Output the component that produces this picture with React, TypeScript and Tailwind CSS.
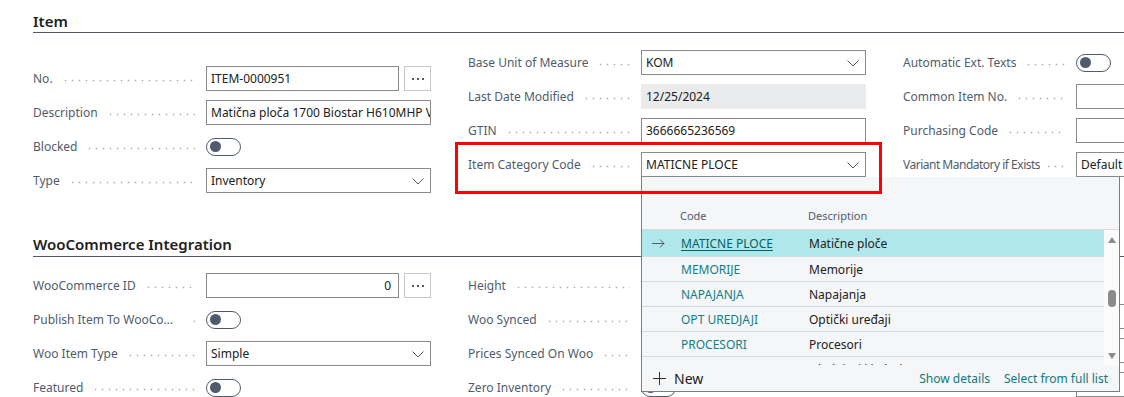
import React from 'react';

const Dots = ({ tight = false }: { tight?: boolean }) => (
  <span
    className={
      tight
        ? 'ml-[5px] mr-[8px] mt-[4px] h-[3px] min-w-[4px] flex-1 bg-[radial-gradient(circle,#a9afb8_0.75px,transparent_1.1px)] bg-[length:7px_3px] bg-repeat-x'
        : 'ml-[9px] mr-[11px] mt-[4px] h-[3px] min-w-[4px] flex-1 bg-[radial-gradient(circle,#a9afb8_0.75px,transparent_1.1px)] bg-[length:7px_3px] bg-repeat-x'
    }
  />
);

const Chevron = () => (
  <svg width="12" height="7" viewBox="0 0 12 7" fill="none" className="mt-px shrink-0">
    <path d="M0.5 0.5L6 6L11.5 0.5" stroke="#505c6d" strokeWidth="1" />
  </svg>
);

type RowProps = {
  label: string;
  long?: boolean;
  children?: React.ReactNode;
  overlay?: React.ReactNode;
  fieldOverlay?: React.ReactNode;
};

const Row = ({ label, long = false, children, overlay, fieldOverlay }: RowProps) => (
  <div className="relative flex h-[25px] items-center">
    <div className="flex w-[173px] items-center">
      <span
        className={
          long
            ? 'max-w-[162px] truncate pt-px tracking-[-0.5px] text-[#505c6d]'
            : 'max-w-[156px] truncate pt-px text-[#505c6d]'
        }
      >
        {label}
      </span>
      <Dots tight={long} />
    </div>
    <div className="relative flex h-full w-[225px] items-center">
      {children}
      {fieldOverlay}
    </div>
    {overlay}
  </div>
);

const TextBox = ({ value = '', right = false }: { value?: string; right?: boolean }) => (
  <div
    className={
      right
        ? 'flex h-full w-full items-center justify-end border border-[#8a8a8a] pr-[7px] pt-px'
        : 'flex h-full w-full items-center overflow-hidden whitespace-nowrap border border-[#8a8a8a] pl-[4px] pt-px'
    }
  >
    {value}
  </div>
);

const ReadOnly = ({ value }: { value: string }) => (
  <div className="flex h-full w-full items-center bg-[#eaebec] pl-[5px] pt-px">{value}</div>
);

const Select = ({ value }: { value: string }) => (
  <div className="flex h-full w-full items-center justify-between overflow-hidden whitespace-nowrap border border-[#8a8a8a] pl-[4px] pr-[6px]">
    <span className="pt-px">{value}</span>
    <Chevron />
  </div>
);

const Toggle = () => (
  <div className="flex h-[18px] w-[35px] items-center rounded-full border border-[#505c6d] px-[3px]">
    <div className="size-[11px] rounded-full bg-[#505c6d]" />
  </div>
);

const Lookup = ({ value, right = false }: { value: string; right?: boolean }) => (
  <>
    <div className="h-full w-[193px] shrink-0">
      <TextBox value={value} right={right} />
    </div>
    <div className="ml-[5px] flex h-full w-[27px] items-center justify-center gap-[3px] border border-[#c8c8c8]">
      <span className="size-[2px] rounded-full bg-[#212121]" />
      <span className="size-[2px] rounded-full bg-[#212121]" />
      <span className="size-[2px] rounded-full bg-[#212121]" />
    </div>
  </>
);

const categories = [
  { code: 'MATICNE PLOCE', desc: 'Matične ploče', selected: true },
  { code: 'MEMORIJE', desc: 'Memorije' },
  { code: 'NAPAJANJA', desc: 'Napajanja' },
  { code: 'OPT UREDJAJI', desc: 'Optički uređaji' },
  { code: 'PROCESORI', desc: 'Procesori' },
  { code: 'RASHLADNI', desc: 'Hladnjaci i kuleri' },
];

const CategoryDropdown = () => (
  <div className="absolute left-0 top-full z-20 flex h-[215px] w-[479px] flex-col border border-t-0 border-[#7d7d7d] bg-[#f5f6f8]">
    <div className="flex h-[53px] shrink-0 items-end border-b border-[#d9dadc] pb-[6px] text-[11px] leading-[15px] text-[#505c6d]">
      <span className="ml-[38px] w-[128px]">Code</span>
      <span>Description</span>
    </div>
    <div className="flex h-[135px] shrink-0">
      <div className="flex-1 overflow-hidden">
        {categories.map((c) => (
          <div
            key={c.code}
            className={
              c.selected
                ? 'flex h-[27px] items-center border-b border-[#d9dadc] bg-[#b0e7ea]'
                : 'flex h-[25px] items-center border-b border-[#d9dadc]'
            }
          >
            <div className="flex w-[39px] shrink-0 pl-[10px]">
              {c.selected && (
                <svg width="13" height="9" viewBox="0 0 13 9" fill="none">
                  <path d="M0 4.5H12M8 0.5L12 4.5L8 8.5" stroke="#505c6d" strokeWidth="1" />
                </svg>
              )}
            </div>
            <span
              className={
                c.selected
                  ? 'w-[128px] shrink-0 pt-[2px] text-[#00636b] underline underline-offset-2'
                  : 'w-[128px] shrink-0 pt-[2px] text-[#0f8088]'
              }
            >
              {c.code}
            </span>
            <span className="whitespace-nowrap pt-[2px] text-[#212121]">{c.desc}</span>
          </div>
        ))}
      </div>
      <div className="flex w-[15px] shrink-0 flex-col items-center bg-[#fbfbfb] pb-[6px] pt-[7px]">
        <div className="h-0 w-0 border-x-[4.5px] border-b-[6px] border-x-transparent border-b-[#8b8b8b]" />
        <div className="mt-[47px] h-[17px] w-[8px] rounded-full bg-[#8b8b8b]" />
        <div className="flex-1" />
        <div className="h-0 w-0 border-x-[4.5px] border-t-[6px] border-x-transparent border-t-[#8b8b8b]" />
      </div>
    </div>
    <div className="flex flex-1 items-center pl-[11px] pr-[11px] pt-px">
      <svg width="13" height="13" viewBox="0 0 13 13" fill="none">
        <path d="M6.5 0V13M0 6.5H13" stroke="#323130" strokeWidth="1" />
      </svg>
      <span className="ml-[8px] text-[14px] text-[#212121]">New</span>
      <span className="ml-auto text-[#0f7b82]">Show details</span>
      <span className="ml-[14px] text-[#0f7b82]">Select from full list</span>
    </div>
  </div>
);

const RedBox = () => (
  <div className="absolute left-[-13px] top-[-10px] z-30 h-[52px] w-[427px] border-[3px] border-[#ff0000]" />
);

const Column = ({ children, className = '' }: { children: React.ReactNode; className?: string }) => (
  <div className={`flex w-[398px] shrink-0 flex-col gap-[9px] ${className}`}>{children}</div>
);

export default function App() {
  return (
    <div className="h-[397px] w-full overflow-hidden bg-white font-['Noto_Sans',sans-serif] text-[12px] text-[#212121]">
      <div className="pl-[33px]">
        <div className="border-b border-[#505a69] pb-px pt-[11px] text-[15px] font-semibold leading-[20px]">Item</div>
        <div className="mt-[17px] flex gap-[37px]">
          <Column className="pt-[16px]">
            <Row label="No.">
              <Lookup value="ITEM-0000951" />
            </Row>
            <Row label="Description">
              <TextBox value="Matična ploča 1700 Biostar H610MHP V2.0" />
            </Row>
            <Row label="Blocked">
              <Toggle />
            </Row>
            <Row label="Type">
              <Select value="Inventory" />
            </Row>
          </Column>
          <Column>
            <Row label="Base Unit of Measure">
              <Select value="KOM" />
            </Row>
            <Row label="Last Date Modified">
              <ReadOnly value="12/25/2024" />
            </Row>
            <Row label="GTIN">
              <TextBox value="3666665236569" />
            </Row>
            <Row label="Item Category Code" overlay={<RedBox />} fieldOverlay={<CategoryDropdown />}>
              <Select value="MATICNE PLOCE" />
            </Row>
          </Column>
          <Column>
            <Row label="Automatic Ext. Texts">
              <Toggle />
            </Row>
            <Row label="Common Item No.">
              <TextBox />
            </Row>
            <Row label="Purchasing Code">
              <TextBox />
            </Row>
            <Row label="Variant Mandatory if Exists" long>
              <Select value="Default (No)" />
            </Row>
          </Column>
        </div>

        <div className="mt-[29px] border-b border-[#505a69] pb-[2px] pt-[12px] text-[15px] font-semibold leading-[20px]">
          WooCommerce Integration
        </div>
        <div className="mt-[16px] flex gap-[37px]">
          <Column>
            <Row label="WooCommerce ID">
              <Lookup value="0" right />
            </Row>
            <Row label="Publish Item To WooCommerce">
              <Toggle />
            </Row>
            <Row label="Woo Item Type">
              <Select value="Simple" />
            </Row>
            <Row label="Featured">
              <Toggle />
            </Row>
          </Column>
          <Column>
            <Row label="Height">
              <TextBox value="0" right />
            </Row>
            <Row label="Woo Synced">
              <Toggle />
            </Row>
            <Row label="Prices Synced On Woo">
              <Toggle />
            </Row>
            <Row label="Zero Inventory">
              <Toggle />
            </Row>
          </Column>
          <Column className="-mt-[3px]">
            <Row label="Manage Stock">
              <Toggle />
            </Row>
            <Row label="Weight">
              <TextBox />
            </Row>
            <Row label="Length">
              <TextBox />
            </Row>
            <Row label="Width">
              <TextBox />
            </Row>
          </Column>
        </div>
      </div>
    </div>
  );
}
